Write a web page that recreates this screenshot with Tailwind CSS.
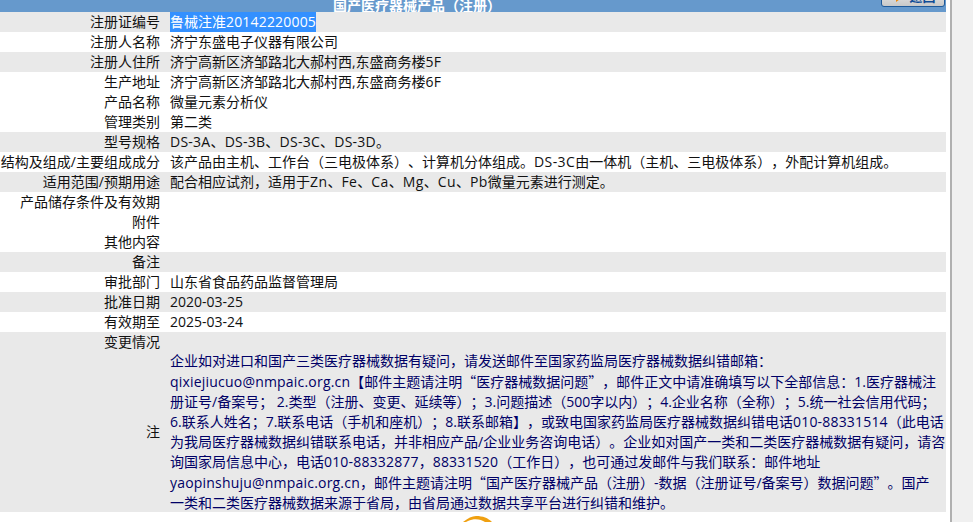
<!DOCTYPE html>
<html lang="zh"><head><meta charset="utf-8">
<script src="https://cdn.jsdelivr.net/npm/@tailwindcss/browser@4"></script>
</head>
<body class="bg-white overflow-hidden">
<div class="relative h-[522px] w-[973px] overflow-hidden text-[14px] leading-5 text-[#111] [text-spacing-trim:space-all] [font-family:'Open_Sans','Noto_Sans_CJK_SC',sans-serif]">
  <div class="relative flex h-[12px] w-[946px] items-end overflow-hidden bg-[#6699cc] pl-[333px] text-[14px] font-bold text-white"><span class="-mb-[4px] whitespace-nowrap">国产医疗器械产品（注册）</span>
    <div class="absolute right-[1px] top-[-14px] flex h-[21px] w-[64px] items-center justify-center gap-[6px] rounded-[3px] border border-[#1f5a9a] bg-gradient-to-b from-[#f4f4f4] to-[#c8c8c8] text-[13px] leading-none font-bold text-[#0f4c96]">
      <svg width="13" height="10" viewBox="0 0 13 10"><path d="M0 3h6V0l7 5-7 5V7H0z" fill="#ee8a0c"/></svg><span>返回</span>
    </div>
  </div>
  <div class="w-[946px]">
    <div class="flex h-5 bg-[#e9e9e9]"><div class="w-[160px] whitespace-nowrap text-right">注册证编号</div><div class="pl-[10px]"><span class="inline-block h-5 bg-[#3390ff] text-white">鲁械注准<span class="tracking-[0.18px]">20142220005</span></span></div></div>
    <div class="flex h-5"><div class="w-[160px] text-right">注册人名称</div><div class="pl-[10px]">济宁东盛电子仪器有限公司</div></div>
    <div class="flex h-5 bg-[#e9e9e9]"><div class="w-[160px] text-right">注册人住所</div><div class="pl-[10px]">济宁高新区济邹路北大郝村西,东盛商务楼5F</div></div>
    <div class="flex h-5"><div class="w-[160px] text-right">生产地址</div><div class="pl-[10px]">济宁高新区济邹路北大郝村西,东盛商务楼6F</div></div>
    <div class="flex h-5"><div class="w-[160px] text-right">产品名称</div><div class="pl-[10px]">微量元素分析仪</div></div>
    <div class="flex h-5"><div class="w-[160px] text-right">管理类别</div><div class="pl-[10px]">第二类</div></div>
    <div class="flex h-5 bg-[#e9e9e9]"><div class="w-[160px] text-right">型号规格</div><div class="pl-[10px] tracking-[0.25px]">DS-3A、DS-3B、DS-3C、DS-3D。</div></div>
    <div class="flex h-5"><div class="flex w-[160px] justify-end whitespace-nowrap">结构及组成/主要组成成分</div><div class="whitespace-nowrap pl-[10px]">该产品由主机、工作台（三电极体系）、计算机分体组成。<span class="tracking-[0.4px]">DS-3C</span>由一体机（主机、三电极体系），外配计算机组成。</div></div>
    <div class="flex h-5 bg-[#e9e9e9]"><div class="w-[160px] text-right">适用范围/预期用途</div><div class="pl-[10px]">配合相应试剂，适用于<span class="tracking-[0.4px]">Zn</span>、<span class="tracking-[0.4px]">Fe</span>、<span class="tracking-[0.4px]">Ca</span>、<span class="tracking-[0.4px]">Mg</span>、<span class="tracking-[0.4px]">Cu</span>、<span class="tracking-[0.4px]">Pb</span>微量元素进行测定。</div></div>
    <div class="flex h-5"><div class="w-[160px] text-right">产品储存条件及有效期</div></div>
    <div class="flex h-5"><div class="w-[160px] text-right">附件</div></div>
    <div class="flex h-5"><div class="w-[160px] text-right">其他内容</div></div>
    <div class="flex h-5 bg-[#e9e9e9]"><div class="w-[160px] text-right">备注</div></div>
    <div class="flex h-5"><div class="w-[160px] text-right">审批部门</div><div class="pl-[10px]">山东省食品药品监督管理局</div></div>
    <div class="flex h-5 bg-[#e9e9e9]"><div class="w-[160px] text-right">批准日期</div><div class="pl-[10px]">2020-03-25</div></div>
    <div class="flex h-5"><div class="w-[160px] text-right">有效期至</div><div class="pl-[10px]">2025-03-24</div></div>
    <div class="flex h-5 bg-[#e9e9e9]"><div class="w-[160px] text-right">变更情况</div></div>
    <div class="flex h-[160px] items-center bg-[#e9e9e9]"><div class="w-[160px] text-right">注</div><div class="w-[786px] whitespace-nowrap pl-[10px] text-[#000066]">企业如对进口和国产三类医疗器械数据有疑问，请发送邮件至国家药监局医疗器械数据纠错邮箱：<br><span class="tracking-[0.2px]">qixiejiucuo@nmpaic.org.cn</span>【邮件主题请注明<span class="[font-family:'Noto_Sans_CJK_SC',sans-serif]">“</span>医疗器械数据问题<span class="[font-family:'Noto_Sans_CJK_SC',sans-serif]">”</span>，邮件正文中请准确填写以下全部信息：1.医疗器械注<br>册证号/备案号； 2.类型（注册、变更、延续等）；3.问题描述（500字以内）；4.企业名称（全称）；5.统一社会信用代码；<br>6.联系人姓名；7.联系电话（手机和座机）；8.联系邮箱】，或致电国家药监局医疗器械数据纠错电话<span class="tracking-[0.18px]">010-88331514</span>（此电话<br>为我局医疗器械数据纠错联系电话，并非相应产品/企业业务咨询电话）。企业如对国产一类和二类医疗器械数据有疑问，请咨<br>询国家局信息中心，电话<span class="tracking-[0.18px]">010-88332877</span>，<span class="tracking-[0.18px]">88331520</span>（工作日），也可通过发邮件与我们联系：邮件地址<br><span class="tracking-[0.2px]">yaopinshuju@nmpaic.org.cn</span>，邮件主题请注明<span class="[font-family:'Noto_Sans_CJK_SC',sans-serif]">“</span>国产医疗器械产品（注册）-数据（注册证号/备案号）数据问题<span class="[font-family:'Noto_Sans_CJK_SC',sans-serif]">”</span>。国产<br>一类和二类医疗器械数据来源于省局，由省局通过数据共享平台进行纠错和维护。</div></div>
  </div>
  <div class="pt-[4px] pl-[463px]">
    <svg class="block" width="30" height="6" viewBox="0 0 30 6"><path d="M0 6C5 2 9 0 13 0c7 0 12 2 16 6h-7C18 3 11 2 5 5L3 6z" fill="#f0a010"/></svg>
  </div>
  <div class="absolute inset-y-0 left-[950px] w-[23px] border-l-2 border-[#b0b0b0] bg-[#f0f0f0]"></div>
</div>
</body></html>
